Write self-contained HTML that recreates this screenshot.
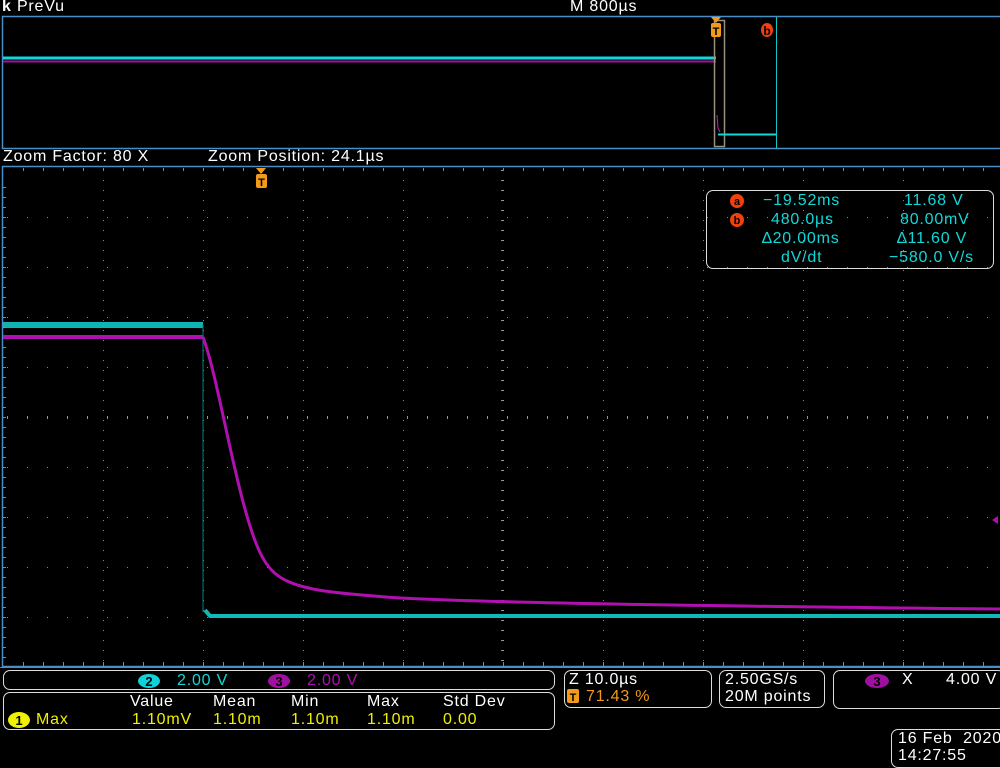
<!DOCTYPE html>
<html><head><style>
body{margin:0;background:#000;width:1000px;height:768px;overflow:hidden;font-family:"Liberation Sans",sans-serif;color:#fff;}
.t{position:absolute;white-space:pre;font-size:16px;line-height:16px;letter-spacing:0.8px;}
.box{position:absolute;border:1.5px solid #ddd;border-radius:7px;}
</style></head><body>
<svg width="1000" height="768" style="position:absolute;left:0;top:0">
<rect x="2.5" y="16.5" width="1000" height="132" fill="none" stroke="#4a8ec8" stroke-width="1.5"/>
<line x1="3" y1="58" x2="716" y2="58" stroke="#10d8d8" stroke-width="3"/>
<line x1="3" y1="61.5" x2="716" y2="61.5" stroke="#a010a0" stroke-width="2"/>
<rect x="714.5" y="20.5" width="10" height="126" fill="none" stroke="#9a9080" stroke-width="1.5"/>
<line x1="718" y1="134.5" x2="776" y2="134.5" stroke="#10d8d8" stroke-width="2"/>
<line x1="776.5" y1="17" x2="776.5" y2="148" stroke="#10c8c8" stroke-width="1"/>
<path d="M717 115 L718 128 L720 132" stroke="#c020c0" fill="none"/>
<polygon points="711,17 721,17 716,23" fill="#f39a1a"/>
<rect x="711" y="23" width="10" height="14" rx="2" fill="#f39a1a"/>
<text x="716" y="35" font-size="11" text-anchor="middle" fill="#000" font-family="Liberation Sans" font-weight="bold">T</text>
<ellipse cx="767" cy="30" rx="6" ry="7" fill="#f04010"/>
<text x="767" y="35" font-size="12" text-anchor="middle" fill="#000" font-family="Liberation Sans" font-weight="bold">b</text>
<rect x="2.5" y="166.5" width="1000" height="500" fill="none" stroke="#4a8ec8" stroke-width="1.5"/>
<g id="grid"></g>
<path d="M3 325 H203" stroke="#10c8c8" stroke-width="6" opacity="0.9"/>
<path d="M3 337 H203" stroke="#b010b0" stroke-width="4"/>
<path d="M203 325 V612" stroke="#0a8080" stroke-width="1"/>
<path d="M203 337 C215 370 225 430 240 490 C255 550 265 570 285 580 C305 590 330 593 400 598 C500 603 700 606 1000 609" stroke="#b010b0" stroke-width="3" fill="none"/>
<path d="M205 610 L210 616 H1000" stroke="#10b8b8" stroke-width="4" fill="none"/>
<polygon points="992,520 998,516 998,524" fill="#b010b0"/>
<polygon points="256,168 266,168 261,174" fill="#f39a1a"/>
<rect x="256" y="174" width="11" height="14" rx="2" fill="#f39a1a"/>
<text x="261.5" y="186" font-size="11" text-anchor="middle" fill="#000" font-family="Liberation Sans" font-weight="bold">T</text>
<line x1="0" y1="667.5" x2="1000" y2="667.5" stroke="#4a8ec8" stroke-width="1"/>
<ellipse cx="149" cy="681" rx="11" ry="7" fill="#10d0d8"/>
<text x="149" y="686" font-size="13" text-anchor="middle" fill="#000" font-family="Liberation Sans" font-weight="bold">2</text>
<ellipse cx="279" cy="681" rx="11" ry="7" fill="#a010a0"/>
<text x="279" y="686" font-size="13" text-anchor="middle" fill="#000" font-family="Liberation Sans" font-weight="bold">3</text>
<ellipse cx="19" cy="720" rx="11" ry="8" fill="#f0f000"/>
<text x="19" y="725" font-size="13" text-anchor="middle" fill="#000" font-family="Liberation Sans" font-weight="bold">1</text>
<ellipse cx="877" cy="681" rx="12" ry="7" fill="#a010a0"/>
<text x="877" y="686" font-size="13" text-anchor="middle" fill="#000" font-family="Liberation Sans" font-weight="bold">3</text>
<rect x="567" y="689" width="12" height="14" rx="2" fill="#f39a1a"/>
<text x="573" y="701" font-size="11" text-anchor="middle" fill="#000" font-family="Liberation Sans" font-weight="bold">T</text>
<circle cx="737" cy="201" r="7" fill="#f04010"/>
<text x="737" y="205" font-size="11" text-anchor="middle" fill="#000" font-family="Liberation Sans" font-weight="bold">a</text>
<circle cx="737" cy="220" r="7" fill="#f04010"/>
<text x="737" y="224" font-size="11" text-anchor="middle" fill="#000" font-family="Liberation Sans" font-weight="bold">b</text>
</svg>
<script>
(function(){var g=document.getElementById('grid'),s='';
for(var x=103;x<1000;x+=100)for(var y=170;y<666;y+=10)s+='<rect x="'+x+'" y="'+y+'" width="1" height="1" fill="#888"/>';
for(var y=217;y<666;y+=50)for(var x=7;x<1000;x+=20)s+='<rect x="'+x+'" y="'+y+'" width="1" height="1" fill="#888"/>';
for(var y=187;y<666;y+=10)s+='<rect x="3" y="'+y+'" width="3" height="1" fill="#888"/>';
for(var y=170;y<666;y+=10)s+='<rect x="501" y="'+y+'" width="3" height="1" fill="#999"/>';
for(var x=7;x<1000;x+=20)s+='<rect x="'+x+'" y="416" width="1" height="3" fill="#999"/>';
for(var x=23;x<1000;x+=20)s+='<rect x="'+x+'" y="662" width="1" height="4" fill="#888"/><rect x="'+x+'" y="168" width="1" height="3" fill="#888"/>';
g.innerHTML=s;})();
</script>
<div class="t" style="left:2px;top:-1px;font-size:16px"><b>k</b> PreVu</div>
<div class="t" style="left:570px;top:-1px;">M 800µs</div>
<div class="t" style="left:3px;top:149px">Zoom Factor: 80 X</div>
<div class="t" style="left:208px;top:149px">Zoom Position: 24.1µs</div>
<div class="box" style="left:706px;top:190px;width:286px;height:77px;"></div>
<div class="t" style="left:763px;top:193px;color:#10d8d8">−19.52ms</div>
<div class="t" style="left:904px;top:193px;color:#10d8d8">11.68 V</div>
<div class="t" style="left:771px;top:212px;color:#10d8d8">480.0µs</div>
<div class="t" style="left:900px;top:212px;color:#10d8d8">80.00mV</div>
<div class="t" style="left:762px;top:231px;color:#10d8d8">∆20.00ms</div>
<div class="t" style="left:897px;top:231px;color:#10d8d8">∆11.60 V</div>
<div class="t" style="left:781px;top:250px;color:#10d8d8">dV/dt</div>
<div class="t" style="left:889px;top:250px;color:#10d8d8">−580.0 V/s</div>
<div class="box" style="left:3px;top:670px;width:550px;height:18px;"></div>
<div class="t" style="left:177px;top:673px;color:#10d8d8">2.00 V</div>
<div class="t" style="left:307px;top:673px;color:#b010b0">2.00 V</div>
<div class="box" style="left:3px;top:692px;width:550px;height:36px;"></div>
<div class="t" style="left:130px;top:694px">Value</div>
<div class="t" style="left:213px;top:694px">Mean</div>
<div class="t" style="left:291px;top:694px">Min</div>
<div class="t" style="left:367px;top:694px">Max</div>
<div class="t" style="left:443px;top:694px">Std Dev</div>
<div class="t" style="left:36px;top:712px;color:#f0f000">Max</div>
<div class="t" style="left:132px;top:712px;color:#f0f000">1.10mV</div>
<div class="t" style="left:213px;top:712px;color:#f0f000">1.10m</div>
<div class="t" style="left:291px;top:712px;color:#f0f000">1.10m</div>
<div class="t" style="left:367px;top:712px;color:#f0f000">1.10m</div>
<div class="t" style="left:443px;top:712px;color:#f0f000">0.00</div>
<div class="box" style="left:564px;top:670px;width:146px;height:36px;"></div>
<div class="t" style="left:569px;top:672px">Z 10.0µs</div>
<div class="t" style="left:586px;top:689px;color:#f39a1a">71.43 %</div>
<div class="box" style="left:719px;top:670px;width:104px;height:36px;"></div>
<div class="t" style="left:725px;top:672px">2.50GS/s</div>
<div class="t" style="left:725px;top:689px">20M points</div>
<div class="box" style="left:833px;top:670px;width:170px;height:37px;"></div>
<div class="t" style="left:902px;top:672px">X</div>
<div class="t" style="left:946px;top:672px">4.00 V</div>
<div class="box" style="left:891px;top:729px;width:115px;height:37px;"></div>
<div class="t" style="left:898px;top:731px">16 Feb  2020</div>
<div class="t" style="left:898px;top:748px">14:27:55</div>
</body></html>
